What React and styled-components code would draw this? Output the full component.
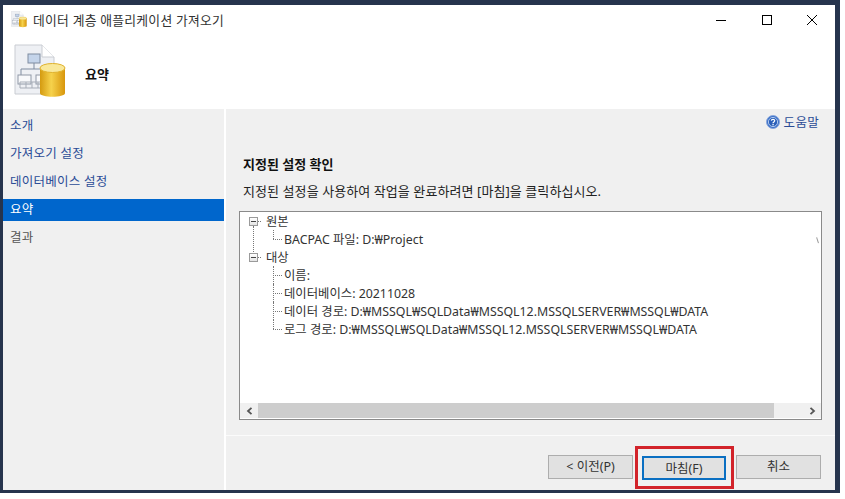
import React from 'react'
import styled, { createGlobalStyle } from 'styled-components'

const GlobalStyle = createGlobalStyle`
  html, body { margin: 0; padding: 0; background: #fff; }
  body { font-family: "Noto Sans", "Noto Sans CJK KR", sans-serif; font-size: 12px; }
`

const Desktop = styled.div`
  width: 840px;
  height: 493px;
  box-sizing: border-box;
  padding: 5px 5px 3px 3px;
  background: #26344d;
`
const Dialog = styled.div`
  height: 100%;
  display: flex;
  flex-direction: column;
  background: #fff;
`
const Header = styled.header`
  height: 104px;
  flex: none;
  display: flex;
  flex-direction: column;
`
const TitleBar = styled.div`
  height: 29px;
  display: flex;
  align-items: center;
  padding-left: 8px;
  gap: 6px;
`
const WindowTitle = styled.span`
  flex: 1;
  font-size: 12.8px;
  color: #333;
  letter-spacing: 0.25px;
`
const WindowControls = styled.div`
  display: flex;
`
const ControlButton = styled.div`
  width: 45.5px;
  height: 29px;
  display: flex;
  align-items: center;
  justify-content: center;
`
const Banner = styled.div`
  flex: 1;
  display: flex;
  align-items: center;
  padding-left: 11px;
  gap: 19px;
`
const PageTitle = styled.h1`
  margin: 0;
  padding-top: 4px;
  font-size: 13px;
  font-weight: 700;
  color: #111;
`
const Body = styled.div`
  flex: 1;
  min-height: 0;
  display: flex;
  gap: 2px;
`
const Sidebar = styled.nav`
  width: 221px;
  flex: none;
  background: #f0f0f0;
  padding-top: 6px;
`
const NavItem = styled.div`
  height: 22px;
  box-sizing: border-box;
  margin-bottom: 6px;
  padding: 0 0 3px 7px;
  display: flex;
  align-items: center;
  font-size: 12.5px;
  letter-spacing: 0.25px;
  color: ${p => (p.$active ? '#fff' : p.$disabled ? '#555' : '#2b4c96')};
  background: ${p => (p.$active ? '#0066cc' : 'transparent')};
`
const Content = styled.main`
  flex: 1;
  min-width: 0;
  display: flex;
  flex-direction: column;
  background: #f0f0f0;
`
const HelpRow = styled.div`
  height: 25px;
  display: flex;
  justify-content: flex-end;
  align-items: center;
  gap: 4px;
  padding-right: 16px;
`
const HelpText = styled.span`
  font-size: 12.5px;
  color: #2b4c96;
  letter-spacing: 0.3px;
`
const Section = styled.section`
  flex: 1;
  min-height: 0;
  display: flex;
  flex-direction: column;
  padding: 21px 13px 15px 13px;
`
const SectionTitle = styled.h2`
  margin: 0 0 0 4px;
  font-size: 13px;
  line-height: 18px;
  font-weight: 700;
  color: #111;
`
const Description = styled.p`
  margin: 9px 0 11px 4px;
  font-size: 13px;
  line-height: 18px;
  letter-spacing: 0.08px;
  color: #222;
`
const SummaryBox = styled.div`
  position: relative;
  flex: 1;
  min-height: 0;
  display: flex;
  flex-direction: column;
  border: 1px solid #8a8a8a;
  background: #fff;
`
const Tree = styled.div`
  flex: 1;
`
const TreeRow = styled.div`
  position: relative;
  height: 18px;
  display: flex;
  align-items: center;
  padding-left: ${p => (p.$child ? 44 : 26)}px;
  font-size: 12.35px;
  color: #333;
  white-space: nowrap;

  &::before {
    content: '';
    display: ${p => (p.$child ? 'block' : 'none')};
    position: absolute;
    left: 33px;
    top: 0;
    height: ${p => (p.$last ? 9 : 18)}px;
    border-left: 1px dotted #777;
  }
  &::after {
    content: '';
    position: absolute;
    left: ${p => (p.$child ? 33 : 18)}px;
    top: 9px;
    width: ${p => (p.$child ? 9 : 3)}px;
    border-top: 1px dotted #777;
  }
`
const Expander = styled.span`
  position: absolute;
  z-index: 1;
  left: 9px;
  top: 5px;
  width: 7px;
  height: 7px;
  border: 1px solid #9a9a9a;
  background: linear-gradient(#fff, #e4e4e4);

  &::after {
    content: '';
    position: absolute;
    left: 1px;
    top: 3px;
    width: 5px;
    height: 1px;
    background: #444;
  }
`
const RootLink = styled.span`
  position: absolute;
  left: 13px;
  top: 14px;
  height: 26px;
  border-left: 1px dotted #777;
`
const ClippedMark = styled.span`
  position: absolute;
  right: 1px;
  top: 25px;
  width: 2px;
  height: 6px;
  border-left: 1px solid #999;
  transform: rotate(-18deg);
`
const ScrollBar = styled.div`
  height: 15px;
  margin: 0 0 1px;
  display: flex;
  background: #f0f0f0;
`
const ArrowButton = styled.div`
  width: 18px;
  flex: none;
  display: flex;
  align-items: center;
  justify-content: center;
`
const ScrollTrack = styled.div`
  flex: 1;
  padding-right: 29px;
`
const ScrollThumb = styled.div`
  height: 100%;
  background: #cdcdcd;
`
const Footer = styled.footer`
  height: 55px;
  flex: none;
  box-sizing: border-box;
  border-top: 1px solid #fbfbfb;
  display: flex;
  justify-content: flex-end;
  padding: 19px 14px 0 0;
  gap: 9px;
`
const Highlight = styled.div`
  margin: -9px -7px 0 -7px;
  padding: 7px 5px 4px 4px;
  height: 26px;
  border: 3px solid #d2232a;
  box-sizing: content-box;
  display: flex;
`
const WizardButton = styled.button`
  width: ${p => p.$width || 85}px;
  height: 24px;
  box-sizing: border-box;
  border: ${p => (p.$primary ? '2px solid #0a6fc2' : '1px solid #adadad')};
  background: #e1e1e1;
  padding: 0 0 3px;
  font-family: inherit;
  font-size: 12.5px;
  color: #333;
`

function PageIcon({ size }) {
  return (
    <svg width={size} height={size * 55 / 52} viewBox="0 0 52 55" fill="none">
      <defs>
        <linearGradient id={`gold${size}`} x1="0" x2="1" y1="0" y2="0">
          <stop offset="0" stopColor="#d49a10" />
          <stop offset="0.45" stopColor="#f6d24c" />
          <stop offset="1" stopColor="#d8960c" />
        </linearGradient>
      </defs>
      <path d="M1 1H28L40 13V50H1Z" fill="#eef0f4" stroke="#c9ccd2" />
      <path d="M28 1V13H40" fill="#fff" stroke="#c9ccd2" />
      <rect x="14" y="10" width="12" height="9" fill="#c4d4ea" stroke="#7f8ca0" />
      <path d="M20 19V25M7 31V25H33V31" stroke="#7f8ca0" />
      <rect x="2" y="25" width="13" height="9" fill="#f8f9fb" stroke="#8f98a6" transform="translate(2 6)" />
      <rect x="22" y="31" width="10" height="9" fill="#f8f9fb" stroke="#8f98a6" />
      <path d="M6 38H30V44H6ZM12 38V44M18 38V44M24 38V44" stroke="#a7adb7" />
      <path d="M26 24C26 20 51 20 51 24V49C51 54 26 54 26 49Z" fill={`url(#gold${size})`} />
      <ellipse cx="38.5" cy="24" rx="12.5" ry="4.5" fill="#f9e89a" stroke="#e0b22e" />
    </svg>
  )
}

function HelpIcon() {
  return (
    <svg width="14" height="14" viewBox="0 0 14 14">
      <circle cx="7" cy="7" r="6.5" fill="#3a6fc8" stroke="#8aa8dc" />
      <circle cx="7" cy="7" r="4.6" fill="#2a5fb8" stroke="#cfe0f7" strokeWidth="0.8" />
      <path d="M5.3 5.6C5.4 3.8 8.8 3.9 8.7 5.7C8.7 6.9 7 6.9 7 8.2" fill="none" stroke="#fff" strokeWidth="1.2" />
      <rect x="6.4" y="9" width="1.3" height="1.3" fill="#fff" />
    </svg>
  )
}

function Chevron({ right }) {
  return (
    <svg width="7" height="8" viewBox="0 0 7 8" fill="none">
      <path d={right ? 'M1.5 0.8L5 4L1.5 7.2' : 'M5.5 0.8L2 4L5.5 7.2'} stroke="#555" strokeWidth="1.8" />
    </svg>
  )
}

const navItems = ['소개', '가져오기 설정', '데이터베이스 설정', '요약', '결과']

export default function App() {
  return (
    <>
      <GlobalStyle />
      <Desktop>
        <Dialog>
          <Header>
            <TitleBar>
              <PageIcon size={16} />
              <WindowTitle>데이터 계층 애플리케이션 가져오기</WindowTitle>
              <WindowControls>
                <ControlButton>
                  <svg width="10" height="10" viewBox="0 0 10 10"><path d="M0 5.5H10" stroke="#000" /></svg>
                </ControlButton>
                <ControlButton>
                  <svg width="10" height="10" viewBox="0 0 10 10" fill="none"><rect x="0.5" y="0.5" width="9" height="9" stroke="#000" /></svg>
                </ControlButton>
                <ControlButton>
                  <svg width="10" height="10" viewBox="0 0 10 10"><path d="M0 0L10 10M10 0L0 10" stroke="#000" /></svg>
                </ControlButton>
              </WindowControls>
            </TitleBar>
            <Banner>
              <PageIcon size={52} />
              <PageTitle>요약</PageTitle>
            </Banner>
          </Header>
          <Body>
            <Sidebar>
              {navItems.map((item, i) => (
                <NavItem key={item} $active={i === 3} $disabled={i === 4}>{item}</NavItem>
              ))}
            </Sidebar>
            <Content>
              <HelpRow>
                <HelpIcon />
                <HelpText>도움말</HelpText>
              </HelpRow>
              <Section>
                <SectionTitle>지정된 설정 확인</SectionTitle>
                <Description>지정된 설정을 사용하여 작업을 완료하려면 [마침]을 클릭하십시오.</Description>
                <SummaryBox>
                  <Tree>
                    <TreeRow><Expander /><RootLink />원본</TreeRow>
                    <TreeRow $child $last>BACPAC 파일: D:₩Project</TreeRow>
                    <TreeRow><Expander />대상</TreeRow>
                    <TreeRow $child>이름:</TreeRow>
                    <TreeRow $child>데이터베이스: 20211028</TreeRow>
                    <TreeRow $child>데이터 경로: D:₩MSSQL₩SQLData₩MSSQL12.MSSQLSERVER₩MSSQL₩DATA</TreeRow>
                    <TreeRow $child $last>로그 경로: D:₩MSSQL₩SQLData₩MSSQL12.MSSQLSERVER₩MSSQL₩DATA</TreeRow>
                  </Tree>
                  <ClippedMark />
                  <ScrollBar>
                    <ArrowButton><Chevron /></ArrowButton>
                    <ScrollTrack><ScrollThumb /></ScrollTrack>
                    <ArrowButton><Chevron right /></ArrowButton>
                  </ScrollBar>
                </SummaryBox>
              </Section>
              <Footer>
                <WizardButton>&lt; 이전(P)</WizardButton>
                <Highlight>
                  <WizardButton $primary $width={84}>마침(F)</WizardButton>
                </Highlight>
                <WizardButton>취소</WizardButton>
              </Footer>
            </Content>
          </Body>
        </Dialog>
      </Desktop>
    </>
  )
}
